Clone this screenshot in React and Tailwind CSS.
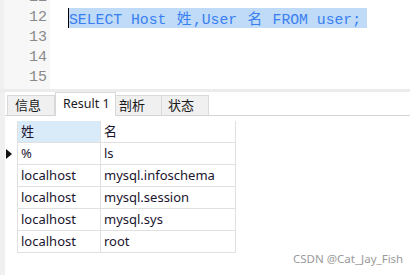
export default function App() {
  const lines = [11, 12, 13, 14, 15];
  const rows = [
    ["%", "ls"],
    ["localhost", "mysql.infoschema"],
    ["localhost", "mysql.session"],
    ["localhost", "mysql.sys"],
    ["localhost", "root"],
  ];
  const mono = { fontFamily: '"Liberation Mono", "Noto Sans CJK SC", monospace' };
  const cjk = "inline-block w-[17.7px] text-center font-['Noto_Sans_CJK_SC',sans-serif]";

  return (
    <div className="w-[410px] h-[275px] bg-white relative overflow-hidden font-['Noto_Sans','Noto_Sans_CJK_SC',sans-serif]">
      {/* Editor */}
      <div className="h-[89px] flex overflow-hidden">
        <div className="w-[4px] bg-[#f0f0f0]" />
        <div className="w-[46px] bg-[#f7f7f7] pr-[3px]">
          <div className="-mt-[12px]">
            {lines.map((n) => (
              <div key={n} className="h-[20px] leading-[20px] text-right text-[15px] text-[#8a8a8a]" style={mono}>
                {n}
              </div>
            ))}
          </div>
        </div>
        <div className="flex-1 pl-[18px]">
          <div className="-mt-[12px]">
            <div className="h-[20px]" />
            <div className="h-[20px] flex">
              <div className="h-[20px] leading-[20px] bg-[#bfdbf7] text-[#3a7ff2] text-[14.76px] whitespace-pre border-l-[1.5px] border-black pr-[6px]" style={mono}>
                SELECT Host <span className={cjk}>姓</span>,User <span className={cjk}>名</span> FROM user;
              </div>
            </div>
          </div>
        </div>
      </div>

      <div className="h-[3px] bg-[#ececec]" />

      {/* Result panel */}
      <div className="flex h-[183px]">
        <div className="w-[5px] bg-[#f0f0f0]" />
        <div className="flex-1">
          <div className="h-[24px] flex items-end pl-[2px] border-b border-[#d4d4d4]">
            <div className="w-[48px] h-[20px] bg-[#f0f0f0] border border-b-0 border-[#d9d9d9] text-[13px] leading-[18px] pl-[7px] text-[#1a1a1a]">信息</div>
            <div className="w-[61px] h-[24px] bg-white border border-b-0 border-[#d9d9d9] -mb-px text-[12.5px] leading-[22px] pl-[7px] text-[#1a1a1a]">Result 1</div>
            <div className="w-[46px] h-[20px] bg-[#f0f0f0] border border-b-0 border-l-0 border-[#d9d9d9] text-[13px] leading-[18px] pl-[3px] text-[#1a1a1a]">剖析</div>
            <div className="w-[47px] h-[20px] bg-[#f0f0f0] border border-b-0 border-l-0 border-[#d9d9d9] text-[13px] leading-[18px] pl-[6px] text-[#1a1a1a]">状态</div>
          </div>

          <div className="mt-[5px] grid grid-cols-[13px_83px_135px] text-[13px] text-[#1c1530]">
            <div className="h-[22px] border-r border-[#e0e0e0]" />
            <div className="h-[22px] bg-[#d9eaf8] border-r border-b border-[#e0e0e0] pl-[3px] leading-[21px]">姓</div>
            <div className="h-[22px] border-r border-b border-[#e0e0e0] pl-[3px] leading-[21px]">名</div>
            {rows.map(([a, b], i) => (
              <div key={i} className="contents">
                <div className="h-[22px] border-r border-[#e0e0e0] flex items-center pl-[1px]">
                  {i === 0 && (
                    <svg width="6" height="10" viewBox="0 0 6 10">
                      <path d="M0 0 L6 5 L0 10 Z" fill="#111" />
                    </svg>
                  )}
                </div>
                <div className="h-[22px] border-r border-b border-[#e0e0e0] pl-[3px] leading-[21px]">{a}</div>
                <div className="h-[22px] border-r border-b border-[#e0e0e0] pl-[3px] leading-[21px]">{b}</div>
              </div>
            ))}
          </div>
        </div>
      </div>

      <div className="absolute left-[293px] top-[250px] text-[11.5px] text-[#9a9a9a] whitespace-nowrap">
        CSDN @Cat_Jay_Fish
      </div>
    </div>
  );
}
